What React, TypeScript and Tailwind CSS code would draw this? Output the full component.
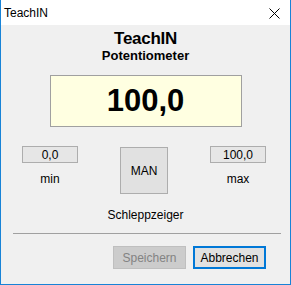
import React from "react";

const font = { fontFamily: '"Liberation Sans", Arial, sans-serif' };

const ValueBox: React.FC<{ value: string; label: string }> = ({ value, label }) => (
  <div className="flex w-[56px] flex-col items-center">
    <div className="flex h-[17px] w-[56px] items-center justify-center border border-[#adadad] bg-[#e6e6e6] pt-[1px] text-[12px] leading-[14px] text-black">
      {value}
    </div>
    <div className="mt-[9px] text-[12px] leading-[14px] text-black">{label}</div>
  </div>
);

export default function App() {
  return (
    <div
      className="flex h-[285px] w-[291px] flex-col border-b border-l border-r border-[#1883d7] bg-white"
      style={font}
    >
      {/* title bar */}
      <div className="flex h-[25px] shrink-0 items-center justify-between bg-white pl-[3px] pr-[10px]">
        <span className="text-[12px] leading-[14px] text-black">TeachIN</span>
        <svg width="11" height="11" viewBox="0 0 11 11" className="mt-[1px]">
          <path d="M0.5 0.5L10.5 10.5M10.5 0.5L0.5 10.5" stroke="#000" strokeWidth="1" />
        </svg>
      </div>

      <div className="flex flex-1 flex-col items-center bg-[#f0f0f0]">
        <div className="mt-[4px] text-[17px] font-bold leading-[19px] tracking-[-0.3px] text-black">TeachIN</div>
        <div className="text-[13px] font-bold leading-[16px] text-black">Potentiometer</div>

        <div className="mt-[11px] flex h-[52px] w-[192px] items-center justify-center border border-[#a0a0a0] bg-[#ffffe1] pb-[2px]">
          <span className="text-[31px] font-bold leading-[31px] text-black">100,0</span>
        </div>

        <div className="mt-[19px] flex w-full items-start pl-[21px]">
          <ValueBox value="0,0" label="min" />
          <button className="ml-[42px] mt-[1px] flex h-[47px] w-[48px] items-center justify-center border border-[#adadad] bg-[#e1e1e1] text-[12px] leading-[14px] text-black">
            MAN
          </button>
          <div className="ml-[42px]">
            <ValueBox value="100,0" label="max" />
          </div>
        </div>

        <div className="mt-[14px] text-[12px] leading-[14px] text-black">Schleppzeiger</div>

        <div className="ml-[12px] mt-[11px] h-px w-[268px] self-start bg-[#a0a0a0]" />

        <div className="mt-[12px] flex w-full justify-end gap-[7px] pr-[24px]">
          <button className="h-[23px] w-[73px] border border-[#bfbfbf] bg-[#cccccc] text-[12px] leading-[14px] text-[#838383]">
            Speichern
          </button>
          <button className="h-[23px] w-[73px] border-2 border-[#0078d7] bg-[#e1e1e1] text-[12px] leading-[14px] text-black">
            Abbrechen
          </button>
        </div>
      </div>
    </div>
  );
}
